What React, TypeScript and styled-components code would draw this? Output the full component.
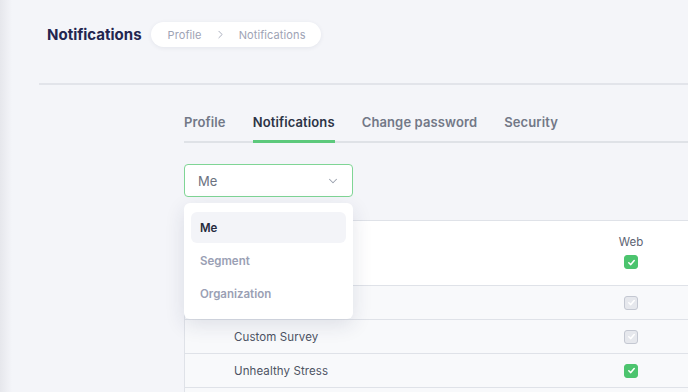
import { useState } from 'react'
import styled, { createGlobalStyle } from 'styled-components'
import { ChevronDown, ChevronRight } from 'lucide-react'

const GlobalStyle = createGlobalStyle`
  html, body {
    margin: 0;
    padding: 0;
    overflow: hidden;
    background: #f4f5f9;
    font-family: Inter, "Open Sans", sans-serif;
  }
  * { box-sizing: border-box; }
`

type Row = { label: string; checked: boolean }

// first row sits under the open menu, so its label is not shown
const rows: Row[] = [
  { label: '', checked: false },
  { label: 'Custom Survey', checked: false },
  { label: 'Unhealthy Stress', checked: true },
  { label: '', checked: true }
]

const tabs = ['Profile', 'Notifications', 'Change password', 'Security']
const audiences = ['Me', 'Segment', 'Organization']

const CheckMark = () => (
  <svg width="9" height="9" viewBox="0 0 10 10" fill="none">
    <polyline
      points="2,5.3 4.2,7.3 8,2.8"
      stroke="#fff"
      strokeWidth="1.7"
      strokeLinecap="round"
      strokeLinejoin="round"
    />
  </svg>
)

export default function App() {
  const [audience, setAudience] = useState('Me')

  return (
    <Page>
      <GlobalStyle />
      <SideShadow />
      <Main>
        <Header>
          <Title>Notifications</Title>
          <Breadcrumb>
            <Crumb>Profile</Crumb>
            <ChevronRight size={13} strokeWidth={1.6} color="#9ea3b5" />
            <Crumb>Notifications</Crumb>
          </Breadcrumb>
        </Header>
        <Divider />

        <Content>
          <Tabs>
            {tabs.map((t) => (
              <Tab key={t} $active={t === 'Notifications'}>
                {t}
              </Tab>
            ))}
          </Tabs>

          <SelectWrap>
            <Select>
              <span>{audience}</span>
              <ChevronDown size={14} strokeWidth={1.8} color="#9aa0ad" />
            </Select>
            <Menu>
              {audiences.map((a) => (
                <MenuItem key={a} $active={a === audience} onClick={() => setAudience(a)}>
                  {a}
                </MenuItem>
              ))}
            </Menu>
          </SelectWrap>

          <Table>
            <HeadRow>
              <div />
              <HeadCell>
                <span>Web</span>
                <Box $checked>
                  <CheckMark />
                </Box>
              </HeadCell>
            </HeadRow>
            {rows.map((r, i) => (
              <BodyRow key={i}>
                <RowLabel>{r.label}</RowLabel>
                <Cell>
                  <Box $checked={r.checked}>
                    <CheckMark />
                  </Box>
                </Cell>
              </BodyRow>
            ))}
          </Table>
        </Content>
      </Main>
    </Page>
  )
}

const Page = styled.div`
  display: flex;
  width: 100vw;
  height: 100vh;
  overflow: hidden;
`

const SideShadow = styled.div`
  flex: 0 0 12px;
  background: linear-gradient(to right, #e6e7ec, #f4f5f9);
`

const Main = styled.div`
  flex: 1;
  min-width: 0;
`

const Header = styled.div`
  display: flex;
  align-items: center;
  gap: 9px;
  padding: 22px 0 0 35px;
`

const Title = styled.h1`
  margin: 0;
  font-size: 15px;
  font-weight: 700;
  color: #23254f;
`

const Breadcrumb = styled.div`
  display: flex;
  align-items: center;
  gap: 12px;
  height: 25px;
  padding: 0 15px 0 17px;
  background: #fff;
  border-radius: 13px;
  box-shadow: 0 1px 4px rgba(40, 50, 90, 0.08);
`

const Crumb = styled.span`
  font-size: 11px;
  letter-spacing: 0.1px;
  color: #9ea3b5;
`

const Divider = styled.div`
  height: 2px;
  margin: 36px 0 0 27px;
  background: #e2e4ea;
`

const Content = styled.div`
  padding: 29px 0 0 172px;
`

const Tabs = styled.div`
  display: flex;
  gap: 27px;
  border-bottom: 2px solid #dfe2e7;
`

const Tab = styled.div<{ $active?: boolean }>`
  padding-bottom: 10px;
  margin-bottom: -2px;
  font-size: 13px;
  font-weight: 600;
  letter-spacing: 0.12px;
  color: ${(p) => (p.$active ? '#2c3345' : '#727887')};
  border-bottom: 3px solid ${(p) => (p.$active ? '#5cc97c' : 'transparent')};
`

const SelectWrap = styled.div`
  position: relative;
  width: 169px;
  margin-top: 21px;
`

const Select = styled.div`
  display: flex;
  align-items: center;
  justify-content: space-between;
  height: 33px;
  padding: 0 12px 0 13px;
  background: #fff;
  border: 1px solid #7fd595;
  border-radius: 4px;
  font-size: 13px;
  color: #6b7180;
`

const Menu = styled.div`
  position: absolute;
  top: 39px;
  left: 0;
  right: 0;
  z-index: 2;
  display: flex;
  flex-direction: column;
  gap: 2px;
  padding: 9px 7px 10px;
  background: #fff;
  border-radius: 6px;
  box-shadow: 0 6px 20px rgba(30, 40, 80, 0.12);
`

const MenuItem = styled.div<{ $active?: boolean }>`
  display: flex;
  align-items: center;
  height: 31px;
  padding: 0 9px;
  border-radius: 6px;
  font-size: 11.5px;
  font-weight: 600;
  cursor: pointer;
  color: ${(p) => (p.$active ? '#262b3d' : '#9aa0b4')};
  background: ${(p) => (p.$active ? '#f3f4f8' : 'transparent')};
`

const Table = styled.div`
  width: 560px;
  margin-top: 23px;
  border-top: 1px solid #dfe2e8;
  border-left: 1px solid #dfe2e8;
`

const rowGrid = `
  display: grid;
  grid-template-columns: 406px 80px 1fr;
  border-bottom: 1px solid #dfe2e8;
`

const HeadRow = styled.div`
  ${rowGrid}
  height: 65px;
  background: #fff;
`

const HeadCell = styled.div`
  display: flex;
  flex-direction: column;
  align-items: center;
  gap: 6px;
  padding-top: 14px;
  font-size: 11.5px;
  color: #5d6372;
`

const BodyRow = styled.div`
  ${rowGrid}
  height: 34px;
  background: #f8f9fb;
`

const RowLabel = styled.div`
  display: flex;
  align-items: center;
  padding-left: 49px;
  font-size: 11.5px;
  letter-spacing: 0.1px;
  color: #4d5363;
`

const Cell = styled.div`
  display: flex;
  align-items: center;
  justify-content: center;
`

const Box = styled.div<{ $checked?: boolean }>`
  display: flex;
  align-items: center;
  justify-content: center;
  width: 14px;
  height: 14px;
  border-radius: 3px;
  background: ${(p) => (p.$checked ? '#4cc46e' : '#e6e8ed')};
  border: 1px solid ${(p) => (p.$checked ? '#4cc46e' : '#c4c8d2')};
`
